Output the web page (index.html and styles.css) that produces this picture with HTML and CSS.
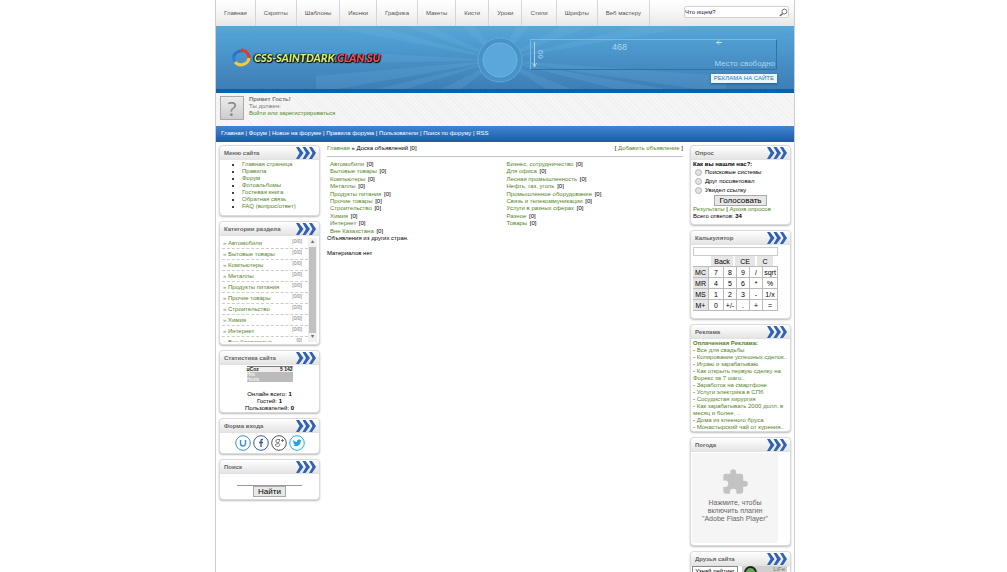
FILE: index.html
```html
<!DOCTYPE html>
<html lang="ru">
<head>
<meta charset="utf-8">
<title>CSS-SAINTDARK.CLAN.SU</title>
<link rel="stylesheet" href="styles.css">
</head>
<body>
<svg class="defs" width="0" height="0" aria-hidden="true">
  <symbol id="chev" viewBox="0 0 20 12">
    <path d="M0 0h3l4.500 6L3 12H0l3.500-6zM6.500 0h3L14 6l-4.500 6h-3L10 6zM13 0h3l4 6-4 6h-3l3.500-6z" fill="#2f62b5"/>
  </symbol>
</svg>
<div class="page">
  <header>
    <div class="topbar">
      <nav class="topnav">
        <a href="#">Главная</a><a href="#">Скрипты</a><a href="#">Шаблоны</a><a href="#">Иконки</a><a href="#">Графика</a><a href="#">Макеты</a><a href="#">Кисти</a><a href="#">Уроки</a><a href="#">Стили</a><a href="#">Шрифты</a><a href="#">Веб мастеру</a>
      </nav>
      <form class="search">
        <input type="text" value="Что ищем?" aria-label="Поиск по сайту">
        <button type="button" aria-label="Искать"><svg viewBox="0 0 10 10" width="9" height="9"><circle cx="6" cy="4" r="2.700" fill="none" stroke="#666"/><path d="M4 6L1 9" stroke="#666" stroke-width="1.500"/></svg></button>
      </form>
    </div>
    <div class="hero">
      <svg class="rays" viewBox="0 0 578 63" preserveAspectRatio="xMidYMid slice" aria-hidden="true">
        <g fill="#7fc0e8" opacity=".16">
          <path d="M284 34L110 0h50zM284 34L190 0h25zM284 34L245 0h14zM284 34L300 0h14zM284 34L345 0h30zM284 34L420 0h60zM284 34L90 24v14zM284 34L100 50v13h22zM284 34L160 63h30zM284 34L225 63h20zM284 34L330 63h25zM284 34L400 63h50zM284 34L510 50v13h-30z"/>
        </g>
        <circle cx="284" cy="34" r="22" fill="#4792c8" stroke="#60a8d8" stroke-width="1"/>
        <circle cx="284" cy="34" r="17" fill="#5ba6da" stroke="#6db4e2"/>
      </svg>
      <a class="logo" href="#">
        <svg viewBox="0 0 20 20" width="20" height="20" fill="none" stroke-width="3">
          <path d="M5 15A8 8 0 0 1 3 7" stroke="#3978d2"/><path d="M3 8A8 7 0 0 1 12 3" stroke="#2f6fc4"/><path d="M10 2A8 8 0 0 1 18 11" stroke="#df3b2d"/><path d="M18 10A8 8 0 0 1 4 14" stroke="#f6ca38"/>
        </svg>
        <span>CSS-SAINTDARK<b>.CLAN.SU</b></span>
      </a>
      <div class="promo">
        <div class="banner">
          <span class="b60">60</span><span class="b468">468</span><span class="free">Место свободно</span>
          <svg class="tip" viewBox="0 0 6 5" width="6" height="5"><path d="M0 2.500h6M1 2.500l2-2M1 2.500l2 2" stroke="#c2e2f6" fill="none"/></svg>
          <svg class="arrow" viewBox="0 0 5 26" width="5" height="26"><path d="M2.500 0v25M.5 21l2 4 2-4" stroke="#a6d3ef" fill="none"/></svg>
        </div>
        <button type="button">РЕКЛАМА НА САЙТЕ</button>
      </div>
    </div>
    <div class="user">
      <div class="avatar">?</div>
      <div><b>Привет Гость!</b><br>Ты должен:<br><a href="#">Войти или зарегистрироваться</a></div>
    </div>
    <nav class="bluebar"><a href="#">Главная</a> | <a href="#">Форум</a> | <a href="#">Новое на форуме</a> | <a href="#">Правила форума</a> | <a href="#">Пользователи</a> | <a href="#">Поиск по форуму</a> | <a href="#">RSS</a></nav>
  </header>
  <div class="cols">
    <aside class="side">
      <section class="box"><h2>Меню сайта<svg><use href="#chev"/></svg></h2>
        <ul class="menu"><li><a href="#">Главная страница</a></li><li><a href="#">Правила</a></li><li><a href="#">Форум</a></li><li><a href="#">Фотоальбомы</a></li><li><a href="#">Гостевая книга</a></li><li><a href="#">Обратная связь</a></li><li><a href="#">FAQ (вопрос/ответ)</a></li></ul>
      </section>
      <section class="box"><h2>Категории раздела<svg><use href="#chev"/></svg></h2>
        <div class="catwrap">
          <ul class="cats"><li><a href="#">Автомобили</a><i>[0/0]</i></li><li><a href="#">Бытовые товары</a><i>[0/0]</i></li><li><a href="#">Компьютеры</a><i>[0/0]</i></li><li><a href="#">Металлы</a><i>[0/0]</i></li><li><a href="#">Продукты питания</a><i>[0/0]</i></li><li><a href="#">Прочие товары</a><i>[0/0]</i></li><li><a href="#">Строительство</a><i>[0/0]</i></li><li><a href="#">Химия</a><i>[0/0]</i></li><li><a href="#">Интернет</a><i>[0/0]</i></li><li><a href="#">Вне Казахстана</a><i>[0]</i></li></ul>
          <div class="scroll"><span>▴</span><div></div><span>▾</span></div>
        </div>
      </section>
      <section class="box"><h2>Статистика сайта<svg><use href="#chev"/></svg></h2>
        <div class="stats">
          <div class="counter"><div><b>uCoz</b><b>5 142</b></div><p>Hits<br>Hosts</p></div>
          Онлайн всего: <b>1</b><br>Гостей: <b>1</b><br>Пользователей: <b>0</b>
        </div>
      </section>
      <section class="box"><h2>Форма входа<svg><use href="#chev"/></svg></h2>
        <div class="social">
          <a href="#" aria-label="uID"><svg viewBox="0 0 16 16"><circle cx="8" cy="8" r="7.300" stroke="#3d8cd0"/><path d="M5.500 5v3.500a2.500 2.500 0 0 0 5 0V5" stroke="#3d8cd0" stroke-width="1.400"/></svg></a>
          <a href="#" aria-label="Facebook"><svg viewBox="0 0 16 16"><circle cx="8" cy="8" r="7.300" stroke="#3c5a9a"/><path d="M10 4.500H9Q8 4.500 8 6v6M6 7.500h4" stroke="#3c5a9a" stroke-width="1.400"/></svg></a>
          <a href="#" aria-label="Google+"><svg viewBox="0 0 16 16"><circle cx="8" cy="8" r="7.300" stroke="#50555c"/><path d="M9 4.500H6.500a1.600 1.600 0 1 0 0 3.200 1.600 1.600 0 0 0 1-3M7 7.800c2 1 2 2 1.600 2.800S5 12 4.500 10.500 6 8.800 7 8.800M10 5.500h3M11.500 4v3" stroke="#50555c" stroke-width=".8"/></svg></a>
          <a href="#" aria-label="Twitter"><svg viewBox="0 0 16 16"><circle cx="8" cy="8" r="7.300" stroke="#20b2e0"/><path d="M4 5q1.800 2 4 2c-.2-2.500 2-3 3.200-2l1.300-.4-.8 1.300.8-.1-1 1c0 4-4 5.500-7.500 3.700q1.500 0 2.200-.8-1.500-.3-1.700-1.400h.8Q4 7.500 4 6.500l.7.200Q3.700 6 4 5z" fill="#20a5dc"/></svg></a>
        </div>
      </section>
      <section class="box"><h2>Поиск<svg><use href="#chev"/></svg></h2>
        <form class="find"><input type="text" aria-label="Поиск"><button type="button">Найти</button></form>
      </section>
    </aside>
    <main>
      <div class="crumbs"><span><a href="#">Главная</a> » <b>Доска объявлений [0]</b></span><span>[ <a href="#">Добавить объявление</a> ]</span></div>
      <div class="lists">
        <ul><li><a href="#">Автомобили</a> [0]</li><li><a href="#">Бытовые товары</a> [0]</li><li><a href="#">Компьютеры</a> [0]</li><li><a href="#">Металлы</a> [0]</li><li><a href="#">Продукты питания</a> [0]</li><li><a href="#">Прочие товары</a> [0]</li><li><a href="#">Строительство</a> [0]</li><li><a href="#">Химия</a> [0]</li><li><a href="#">Интернет</a> [0]</li><li><a href="#">Вне Казахстана</a> [0]</li></ul>
        <ul><li><a href="#">Бизнес, сотрудничество</a> [0]</li><li><a href="#">Для офиса</a> [0]</li><li><a href="#">Лесная промышленность</a> [0]</li><li><a href="#">Нефть, газ, уголь</a> [0]</li><li><a href="#">Промышленное оборудование</a> [0]</li><li><a href="#">Связь и телекоммуникации</a> [0]</li><li><a href="#">Услуги в разных сферах</a> [0]</li><li><a href="#">Разное</a> [0]</li><li><a href="#">Товары</a> [0]</li></ul>
      </div>
      <p>Объявления из других стран.</p>
      <p class="none">Материалов нет</p>
    </main>
    <aside class="side">
      <section class="box"><h2>Опрос<svg><use href="#chev"/></svg></h2>
        <form class="poll"><b>Как вы нашли нас?:</b>
          <label><input type="radio" name="p">Поисковые системы</label><label><input type="radio" name="p">Друг посоветовал</label><label><input type="radio" name="p">Увидел ссылку</label>
          <button type="button">Голосовать</button>
          <div><a href="#">Результаты</a> | <a href="#">Архив опросов</a></div><div>Всего ответов: <b>34</b></div>
        </form>
      </section>
      <section class="box"><h2>Калькулятор<svg><use href="#chev"/></svg></h2>
        <div class="calc">
          <input type="text" aria-label="Результат">
          <div class="ctop"><span></span><button type="button">Back</button><button type="button">CE</button><button type="button">C</button></div>
          <div class="keys">
            <button type="button">MC</button><button type="button">7</button><button type="button">8</button><button type="button">9</button><button type="button">/</button><button type="button">sqrt</button>
            <button type="button">MR</button><button type="button">4</button><button type="button">5</button><button type="button">6</button><button type="button">*</button><button type="button">%</button>
            <button type="button">MS</button><button type="button">1</button><button type="button">2</button><button type="button">3</button><button type="button">-</button><button type="button">1/x</button>
            <button type="button">M+</button><button type="button">0</button><button type="button">+/-</button><button type="button">.</button><button type="button">+</button><button type="button">=</button>
          </div>
        </div>
      </section>
      <section class="box"><h2>Реклама<svg><use href="#chev"/></svg></h2>
        <div class="ads"><a href="#"><b>Оплаченная Реклама:</b></a><br>- <a href="#">Все для свадьбы</a><br>- <a href="#">Копирование успешных сделок..</a><br>- <a href="#">Играю и зарабатываю</a><br>- <a href="#">Как открыть первую сделку на<br>Форекс за 7 шаго..</a><br>- <a href="#">Заработок на смартфоне</a><br>- <a href="#">Услуги электрика в СПб</a><br>- <a href="#">Сосудистая хирургия</a><br>- <a href="#">Как зарабатывать 2000 долл. в<br>месяц и более, ..</a><br>- <a href="#">Дома из клееного бруса</a><br>- <a href="#">Монастырский чай от курения..</a></div>
      </section>
      <section class="box"><h2>Погода<svg><use href="#chev"/></svg></h2>
        <div class="flash"><svg viewBox="0 0 24 24" width="28" height="28"><path fill="#c3c3c3" d="M20.500 11H19V7a2 2 0 0 0-2-2h-4V3.500a2.500 2.500 0 0 0-5 0V5H4a2 2 0 0 0-2 2v3.800h1.500a2.700 2.700 0 0 1 0 5.400H2V20a2 2 0 0 0 2 2h3.800v-1.500a2.700 2.700 0 0 1 5.400 0V22H17a2 2 0 0 0 2-2v-4h1.500a2.500 2.500 0 0 0 0-5z"/></svg><p>Нажмите, чтобы<br>включить плагин<br>"Adobe Flash Player"</p></div>
      </section>
      <section class="box"><h2>Друзья сайта<svg><use href="#chev"/></svg></h2>
        <div class="friends"><span>Узнай рейтинг</span><div><i></i><em>LiFe</em></div></div>
      </section>
    </aside>
  </div>
</div>
</body>
</html>
```
FILE: styles.css
```css
* { box-sizing: border-box; }
html { overflow: hidden; }
body { margin: 0; padding-left: 3px; background: #fff; color: #000; font: 6px/7px "Liberation Sans", sans-serif; }
a { color: #55851f; text-decoration: none; }
ul { list-style: none; margin: 0; padding: 0; }
p { margin: 0; }
input, button { font: inherit; color: inherit; margin: 0; padding: 0; }
.defs { display: block; }
.page { width: 57%; min-width: 580px; margin: 0 auto; border: solid #c9cdd4; border-width: 0 1px; }
.topbar { display: flex; justify-content: space-between; height: 26px; background: linear-gradient(#fff, #f6f6f6 50%, #e6e6e6); }
.topnav { display: flex; }
.topnav a { padding: 0 8px; line-height: 26px; color: #555; border-right: 1px solid #d6d6d6; }
.search { display: flex; align-items: center; width: 105px; height: 12px; margin: 6px 5px 0 0; background: #fff; border: 1px solid #d2d2d2; border-radius: 2px; }
.search input { flex: 1; min-width: 0; border: 0; background: none; color: #224; }
.search button { display: flex; border: 0; background: none; }
.hero { position: relative; display: flex; justify-content: space-between; height: 67px; background: linear-gradient(#55a6da, #3d7eb6); border-bottom: 4px solid #0563ac; }
.rays { position: absolute; inset: 0; width: 100%; height: 100%; }
.logo { position: relative; display: flex; align-items: center; gap: 3px; margin: 0 0 0 15px; color: #dcf07c; font: italic 900 11px/20px Lato, sans-serif; text-shadow: 0 0 2px #000, 1px 1px 1px #000, -1px 0 1px #000; }
.logo b { color: #f4505c; font-weight: 900; }
.promo { position: relative; display: flex; flex-direction: column; align-items: flex-end; gap: 4px; width: 247px; margin: 13px 17px 0 0; }
.banner { position: relative; width: 100%; height: 31px; border: 1px solid #76bae2; border-right-color: #3272a8; border-bottom-color: #3272a8; color: #a9d5f0; }
.banner > * { position: absolute; }
.b60 { left: 5px; top: 11px; font-size: 8px; transform: rotate(-90deg); }
.b468 { left: 81px; top: 4px; font-size: 9px; }
.free { right: 1px; bottom: 2px; font-size: 8px; }
.tip { left: 185px; top: 0; }
.arrow { left: 1px; top: 2px; }
.promo button { height: 9px; padding: 0 3px; border: 0; background: #edf6fb; color: #3b74a0; box-shadow: 0 1px 2px #235b89; }
.user { display: flex; gap: 5px; padding: 3px 4px; height: 33px; color: #777; background: repeating-linear-gradient(45deg, #f6f6f6 0 2px, #f0f0f0 2px 3px); }
.avatar { width: 24px; height: 24px; border: 1px solid #aaa; background: linear-gradient(#ececec, #ccc); color: #888; font: 20px/23px "Noto Sans", sans-serif; text-align: center; }
.bluebar { height: 16px; padding-left: 5px; line-height: 15px; color: #fff; background: linear-gradient(#3f86d2, #1e5aa8); }
.bluebar a { color: #fff; }
.cols { display: flex; padding: 3px 3px 0; gap: 7px; }
.side { width: 101px; flex: none; display: flex; flex-direction: column; gap: 5px; }
.box { border: 1px solid #dadada; border-radius: 4px; background: #fff; box-shadow: 0 1px 2px #bbb; }
.box h2 { display: flex; justify-content: space-between; align-items: center; height: 14px; margin: 0; padding: 0 3px 0 4px; font-size: 6px; line-height: 14px; color: #666; background: linear-gradient(#fff, #e4e4e4); border-bottom: 1px solid #e2e2e2; border-radius: 4px 4px 0 0; }
.box h2 svg { width: 20px; height: 12px; }
.menu { list-style: disc; padding: 1px 0 5px 22px; height: 55px; }
.catwrap { display: flex; height: 108px; padding: 2px 2px 2px; overflow: hidden; }
.cats { flex: 1; overflow: hidden; }
.cats li { display: flex; justify-content: space-between; height: 11px; padding: 0 6px 0 1px; line-height: 11px; border-bottom: 1px dashed #ccc; }
.cats a::before { content: "» "; color: #888; }
.cats i { color: #777; font-style: normal; line-height: 7px; font-size: 5px; }
.scroll { width: 9px; display: flex; flex-direction: column; background: #f1f1f1; text-align: center; color: #666; }
.scroll div { flex: 1; background: #c1c1c1; margin: 0 1px; }
.scroll span { height: 9px; }
.stats { height: 47px; padding-top: 1px; text-align: center; }
.counter { width: 46px; height: 16px; margin: 0 auto 9px; background: #bbb; color: #fff; text-align: left; font-size: 5px; line-height: 5px; }
.counter div { display: flex; justify-content: space-between; background: #eee; color: #222; border-top: 1px solid #777; }
.social { display: flex; justify-content: center; gap: 2px; padding: 2px; }
.social svg { display: block; width: 16px; height: 16px; fill: none; }
.find { display: flex; flex-direction: column; align-items: center; padding: 6px 0 2px; }
.find input { width: 65px; height: 6px; border: 0; border-bottom: 1px solid #999; }
.find button, .poll button { padding: 0 4px; font: 8px/9px "Liberation Sans", sans-serif; border: 1px solid #aaa; background: #e8e8e8; }
main { flex: 1; min-width: 0; }
.crumbs { display: flex; justify-content: space-between; height: 12px; border-bottom: 1px solid #c4c4c4; margin-bottom: 4px; }
.crumbs b { font-weight: 400; }
.lists { display: grid; grid-template-columns: 1fr 1fr; padding-left: 3px; }
.lists ul { display: grid; grid-template-rows: repeat(10, 1fr); height: 74px; }
.lists a { margin-right: 1px; }
.none { margin-top: 8px; }
.poll { display: flex; flex-direction: column; height: 64px; padding-top: 1px; }
.poll > * { padding-left: 2px; flex: none; }
.poll label { display: flex; align-items: center; gap: 3px; height: 9px; padding-left: 4px; }
.poll input { appearance: none; width: 7px; height: 7px; border: 1px solid #b5b5b5; border-radius: 50%; background: #e2e2e2; }
.poll button { align-self: center; padding: 0 4px; }
.calc { height: 73px; padding: 2px 12px 0 2px; font: 7px/9px "Liberation Sans", sans-serif; }
.calc input { display: block; width: 100%; height: 9px; border: 1px solid #ccc; }
.ctop { display: grid; grid-template-columns: 16px 22px 20px 16px; gap: 2px; height: 10px; }
.calc button { overflow: hidden; border: 0; background: #fff; text-align: center; white-space: nowrap; }
.ctop button { background: #e6e6e6; }
.keys { display: grid; grid-template-columns: 16px 15px 13px 13px 13px 1fr; grid-auto-rows: 11px; border-top: 1px solid #bbb; }
.calc .keys button { border: solid #bbb; border-width: 0 1px 1px 0; }
.calc .keys button:nth-child(6n+1) { background: #e6e6e6; }
.ads { height: 92px; padding: 1px 0 0 2px; white-space: nowrap; }
.flash { display: flex; flex-direction: column; align-items: center; gap: 3px; width: 86px; height: 90px; margin: 1px 1px 2px; padding-top: 15px; background: #f5f5f5; color: #666; text-align: center; font: 7px/8px "Liberation Sans", sans-serif; }
.friends { display: flex; gap: 4px; height: 30px; padding: 0 3px 0 1px; }
.friends span { width: 46px; height: 16px; border: 1px solid #888; line-height: 8px; text-align: center; white-space: nowrap; }
.friends div { display: flex; flex: 1; justify-content: space-between; height: 16px; padding: 0 2px; background: #d0d0d0; color: #777; }
.friends i { width: 13px; height: 13px; border: 2px solid #222; border-radius: 50%; background: #5fae4f; }
.friends em { font-style: normal; }
```
